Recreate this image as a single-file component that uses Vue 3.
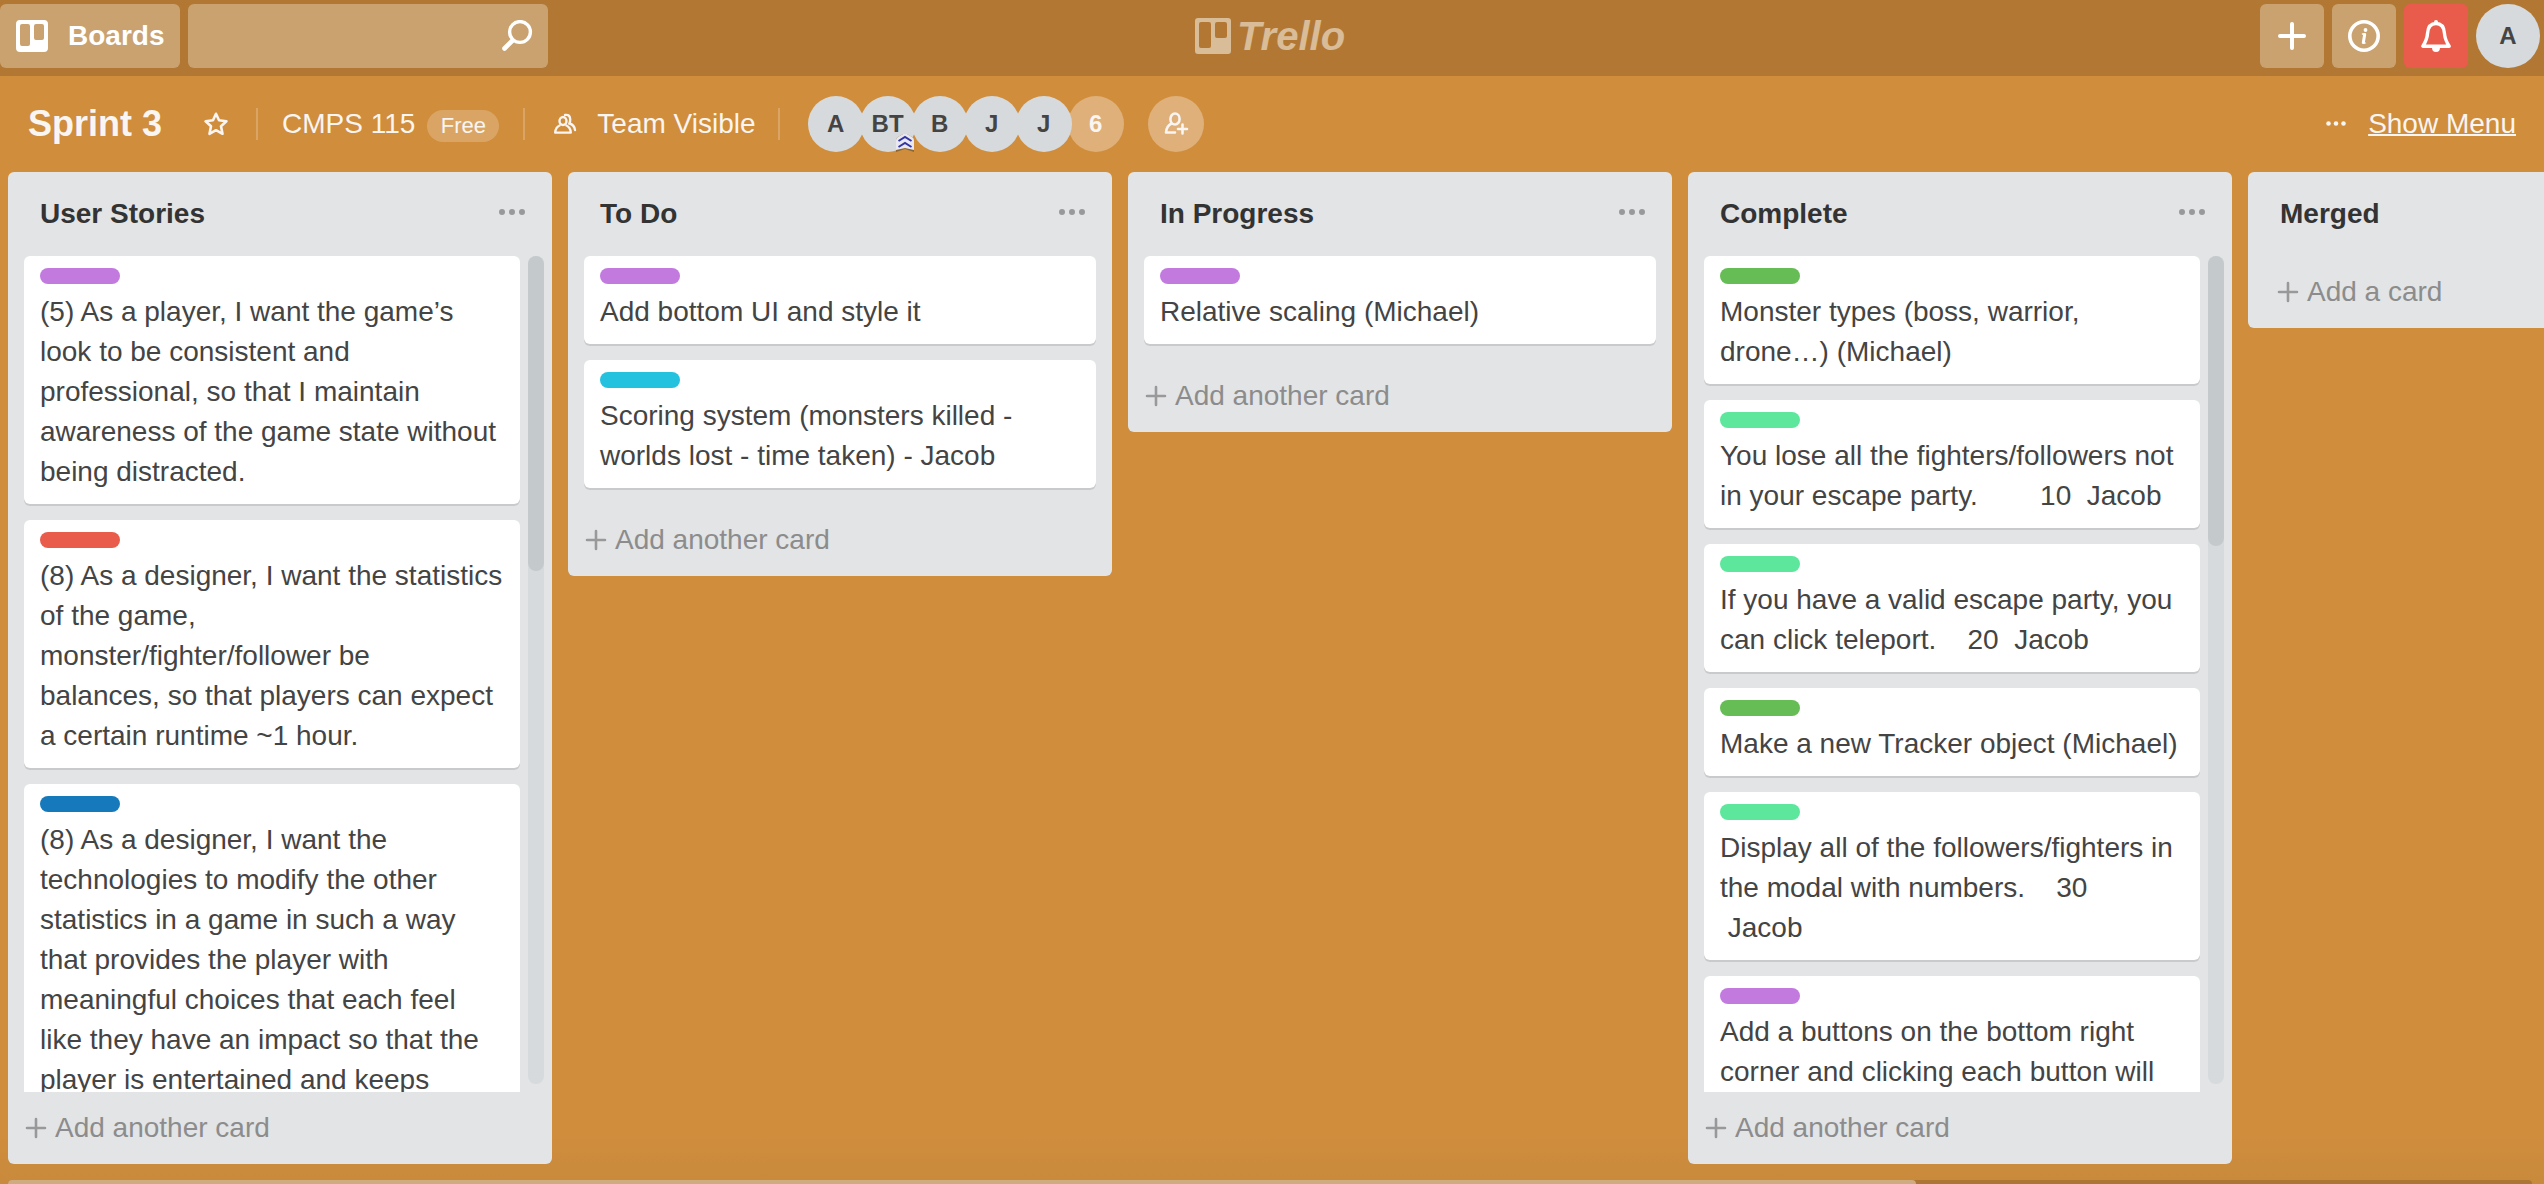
<script setup>
const members = [
  { initials: 'A' },
  { initials: 'BT', admin: true },
  { initials: 'B' },
  { initials: 'J' },
  { initials: 'J' },
]

const lists = [
  {
    title: 'User Stories',
    thumb: 38,
    cards: [
      {
        label: 'purple',
        text: '(5) As a player, I want the game’s\nlook to be consistent and\nprofessional, so that I maintain\nawareness of the game state without\nbeing distracted.',
      },
      {
        label: 'red',
        text: '(8) As a designer, I want the statistics\nof the game,\nmonster/fighter/follower be\nbalances, so that players can expect\na certain runtime ~1 hour.',
      },
      {
        label: 'blue',
        text: '(8) As a designer, I want the\ntechnologies to modify the other\nstatistics in a game in such a way\nthat provides the player with\nmeaningful choices that each feel\nlike they have an impact so that the\nplayer is entertained and keeps',
      },
    ],
  },
  {
    title: 'To Do',
    cards: [
      { label: 'purple', text: 'Add bottom UI and style it' },
      { label: 'sky', text: 'Scoring system (monsters killed -\nworlds lost - time taken) - Jacob' },
    ],
  },
  {
    title: 'In Progress',
    cards: [{ label: 'purple', text: 'Relative scaling (Michael)' }],
  },
  {
    title: 'Complete',
    thumb: 35,
    cards: [
      { label: 'green', text: 'Monster types (boss, warrior,\ndrone…) (Michael)' },
      { label: 'lime', text: 'You lose all the fighters/followers not\nin your escape party.        10  Jacob' },
      { label: 'lime', text: 'If you have a valid escape party, you\ncan click teleport.    20  Jacob' },
      { label: 'green', text: 'Make a new Tracker object (Michael)' },
      { label: 'lime', text: 'Display all of the followers/fighters in\nthe modal with numbers.    30\n Jacob' },
      { label: 'purple', text: 'Add a buttons on the bottom right\ncorner and clicking each button will' },
    ],
  },
  { title: 'Merged', cards: [] },
]
</script>

<template>
  <div class="page">
    <header class="topbar">
      <div class="topbar-left">
        <button class="boards" type="button">
          <svg width="32" height="32" viewBox="0 0 32 32" aria-hidden="true">
            <path
              fill="#fff"
              fill-rule="evenodd"
              d="M4 0H28Q32 0 32 4V28Q32 32 28 32H4Q0 32 0 28V4Q0 0 4 0ZM6 4Q4 4 4 6V24Q4 26 6 26H12Q14 26 14 24V6Q14 4 12 4ZM20 4Q18 4 18 6V18Q18 20 20 20H26Q28 20 28 18V6Q28 4 26 4Z"
            />
          </svg>
          <span>Boards</span>
        </button>
        <form class="search" role="search" @submit.prevent>
          <input type="text" aria-label="Search" />
          <button type="submit" aria-label="Submit search">
            <svg width="32" height="32" viewBox="0 0 32 32" fill="none" stroke="#fff" aria-hidden="true">
              <circle cx="18" cy="12" r="10.400" stroke-width="3.400" />
              <path d="M10.500 20.500L2.500 28.500" stroke-width="4.600" stroke-linecap="round" />
            </svg>
          </button>
        </form>
      </div>

      <a class="logo" href="#" aria-label="Trello home">
        <svg width="36" height="36" viewBox="0 0 36 36" aria-hidden="true">
          <path
            fill="#d9bc98"
            fill-rule="evenodd"
            d="M3 0H33Q36 0 36 3V33Q36 36 33 36H3Q0 36 0 33V3Q0 0 3 0ZM6 4Q4 4 4 6V28Q4 30 6 30H14Q16 30 16 28V6Q16 4 14 4ZM22 4Q20 4 20 6V18Q20 20 22 20H30Q32 20 32 18V6Q32 4 30 4Z"
          />
        </svg>
        <span>Trello</span>
      </a>

      <div class="topbar-right">
        <button class="square" type="button" aria-label="Create">
          <svg width="32" height="32" viewBox="0 0 32 32" aria-hidden="true">
            <path d="M16 4V28M4 16H28" stroke="#fff" stroke-width="4" stroke-linecap="round" />
          </svg>
        </button>
        <button class="square" type="button" aria-label="Information">
          <svg width="32" height="32" viewBox="0 0 32 32" fill="none" stroke="#fff" aria-hidden="true">
            <circle cx="16" cy="16" r="14.200" stroke-width="3.600" />
            <path d="M16.700 14.500L15.300 22.500" stroke-width="3" stroke-linecap="round" />
            <path d="M14.500 14H16.500M15.500 23H17" stroke-width="1.600" stroke-linecap="round" />
            <circle cx="17.500" cy="10" r="1.900" fill="#fff" stroke="none" />
          </svg>
        </button>
        <button class="square alert" type="button" aria-label="Notifications">
          <svg width="32" height="32" viewBox="0 0 32 32" aria-hidden="true">
            <path
              d="M16 3.500C10 3.500 8 8 7.600 13C7.200 18.500 6 21.500 2.800 26.200H29.200C26 21.500 24.800 18.500 24.400 13C24 8 22 3.500 16 3.500Z"
              fill="none"
              stroke="#fff"
              stroke-width="3.400"
              stroke-linejoin="round"
            />
            <path d="M12 27.500H20Q20 32 16 32Q12 32 12 27.500Z" fill="#fff" />
            <circle cx="16" cy="2" r="2" fill="#fff" />
          </svg>
        </button>
        <button class="avatar large" type="button">A</button>
      </div>
    </header>

    <div class="boardbar">
      <h1>Sprint 3</h1>
      <button class="plain star" type="button" aria-label="Star this board">
        <svg width="24" height="24" viewBox="0 0 24 24" aria-hidden="true">
          <path
            d="M12 1.800L15 8.300L22.400 9.300L17 14.300L18.500 21.800L12 18.200L5.500 21.800L7 14.300L1.600 9.300L9 8.300Z"
            fill="none"
            stroke="#f8f5f2"
            stroke-width="2.600"
            stroke-linejoin="round"
          />
        </svg>
      </button>
      <span class="divider"></span>
      <a class="team" href="#">
        <span>CMPS 115</span>
        <span class="pill">Free</span>
      </a>
      <span class="divider"></span>
      <button class="plain visibility" type="button">
        <svg width="24" height="24" viewBox="0 0 24 24" fill="none" stroke="#f8f5f2" aria-hidden="true">
          <ellipse cx="10" cy="9" rx="3.500" ry="4" stroke-width="2.400" />
          <path d="M7.500 13Q2.500 15 2.200 20.600H17.800Q17.500 15 12.500 13" stroke-width="2.400" stroke-linejoin="round" />
          <path d="M12 3Q16.800 2 17.200 7Q17.300 9.500 16.400 11.500Q21.500 13 22 18" stroke-width="2.400" stroke-linecap="round" />
        </svg>
        <span>Team Visible</span>
      </button>
      <span class="divider"></span>
      <div class="members">
        <button v-for="(member, i) in members" :key="i" class="avatar" type="button">
          {{ member.initials }}
          <svg v-if="member.admin" class="rank" width="18" height="18" viewBox="0 0 18 18" aria-hidden="true">
            <path d="M0 6Q0 4 2 3L7 0H11L16 3Q18 4 18 6V18L9 15L0 18Z" fill="#8d6633" />
            <path d="M0 6Q0 4 2 3L7 0H11L16 3Q18 4 18 6V16L9 14L0 16Z" fill="#e9e8ee" />
            <path d="M2.500 7L9 3L15.500 7M2.500 13L9 9L15.500 13" fill="none" stroke="#3236a5" stroke-width="2" />
          </svg>
        </button>
        <button class="avatar faint more" type="button">6</button>
      </div>
      <button class="avatar faint add-member" type="button" aria-label="Add member">
        <svg width="26" height="26" viewBox="0 0 26 26" fill="none" stroke="#f8f5f2" aria-hidden="true">
          <ellipse cx="12" cy="8" rx="4.600" ry="5.500" stroke-width="2.600" />
          <path d="M8.500 12.500Q3.500 15 3 21.500H12" stroke-width="2.600" stroke-linejoin="round" stroke-linecap="round" />
          <path d="M19.500 13.500V22.500M15 18H24" stroke-width="2.600" stroke-linecap="round" />
        </svg>
      </button>
      <div class="menu">
        <svg width="20" height="6" viewBox="0 0 20 6" fill="#f8f5f2" aria-hidden="true">
          <circle cx="2.500" cy="2.500" r="2.300" />
          <circle cx="10" cy="2.500" r="2.300" />
          <circle cx="17.500" cy="2.500" r="2.300" />
        </svg>
        <a href="#">Show Menu</a>
      </div>
    </div>

    <main class="board">
      <section v-for="list in lists" :key="list.title" class="list">
        <div class="list-head">
          <h2>{{ list.title }}</h2>
          <button class="plain" type="button" :aria-label="'Actions for ' + list.title">
            <svg width="28" height="10" viewBox="0 0 28 10" fill="#999" aria-hidden="true">
              <circle cx="4" cy="3" r="3" />
              <circle cx="14" cy="3" r="3" />
              <circle cx="24" cy="3" r="3" />
            </svg>
          </button>
        </div>
        <div class="list-body" :class="{ scrolling: list.thumb }">
          <div class="cards">
            <article v-for="(card, i) in list.cards" :key="i" class="card">
              <span class="label" :class="card.label"></span>
              <p>{{ card.text }}</p>
            </article>
          </div>
          <div v-if="list.thumb" class="track">
            <div class="thumb" :style="{ height: list.thumb + '%' }"></div>
          </div>
        </div>
        <button class="add-card" :class="{ empty: !list.cards.length }" type="button">
          <svg width="22" height="22" viewBox="0 0 22 22" aria-hidden="true">
            <path d="M11 2V20M2 11H20" stroke="#999" stroke-width="2.600" stroke-linecap="round" />
          </svg>
          <span>{{ list.cards.length ? 'Add another card' : 'Add a card' }}</span>
        </button>
      </section>
    </main>

    <div class="hscroll"><div class="hthumb"></div></div>
  </div>
</template>

<style>
body {
  background: #d08d3c;
}
</style>

<style scoped>
.page {
  display: flex;
  flex-direction: column;
  height: 100vh;
  overflow: hidden;
  background: linear-gradient(to top, #c88a3c, #d08d3c 48px);
  color: #444;
  font: 28px/40px "Liberation Sans", Arial, sans-serif;
}
.page * {
  box-sizing: border-box;
}
button,
input {
  margin: 0;
  padding: 0;
  border: 0;
  background: none;
  color: inherit;
  font: inherit;
}
svg {
  display: block;
  flex: none;
}
a {
  color: inherit;
  text-decoration: none;
}
h1,
h2,
p {
  margin: 0;
}

/* Top bar */
.topbar {
  display: grid;
  grid-template-columns: 1fr auto 1fr;
  flex: none;
  height: 76px;
  padding: 4px 4px 8px 0;
  background: #b27833;
}
.topbar-left,
.topbar-right {
  display: flex;
  gap: 8px;
}
.topbar-right {
  justify-content: flex-end;
}
.boards {
  display: flex;
  align-items: center;
  gap: 20px;
  width: 180px;
  padding-left: 16px;
  border-radius: 6px;
  background: #c9a26f;
  color: #fff;
  font-weight: bold;
}
.search {
  display: flex;
  align-items: center;
  width: 360px;
  padding-right: 14px;
  border-radius: 6px;
  background: #c9a26f;
}
.search input {
  flex: 1;
  min-width: 0;
  height: 100%;
  padding-left: 16px;
  color: #fff;
  outline: none;
}
.logo {
  display: flex;
  gap: 6px;
  padding-top: 14px;
  color: #d9bc98;
  font: italic bold 40px/36px "Liberation Sans", Arial, sans-serif;
}
.square {
  display: flex;
  align-items: center;
  justify-content: center;
  width: 64px;
  height: 64px;
  border-radius: 6px;
  background: #c9a26f;
}
.square.alert {
  background: #e95b4b;
}
.avatar {
  position: relative;
  display: flex;
  align-items: center;
  justify-content: center;
  flex: none;
  width: 56px;
  height: 56px;
  border-radius: 50%;
  background: #d6dadc;
  font-size: 24px;
  font-weight: bold;
}
.avatar.large {
  width: 64px;
  height: 64px;
}

/* Board bar */
.boardbar {
  display: flex;
  align-items: center;
  flex: none;
  height: 96px;
  padding: 0 28px;
  color: #f8f5f2;
}
h1 {
  font-size: 36px;
  line-height: 40px;
}
.star {
  margin: 0 28px 0 42px;
}
.divider {
  width: 2px;
  height: 32px;
  background: #daa564;
}
.team {
  display: flex;
  align-items: center;
  gap: 12px;
  margin: 0 24px;
}
.pill {
  width: 72px;
  height: 32px;
  margin-top: 4px;
  border-radius: 16px;
  background: #daa564;
  font-size: 22px;
  line-height: 32px;
  text-align: center;
}
.visibility {
  display: flex;
  align-items: center;
  gap: 20px;
  margin: 0 22px 0 28px;
}
.members {
  display: flex;
  margin: 0 24px 0 28px;
  color: #444;
}
.members .avatar {
  z-index: 1;
}
.members .avatar + .avatar {
  margin-left: -4px;
}
.avatar.faint {
  background: #dfb07a;
  color: #f8f5f2;
}
.members .more {
  z-index: 0;
}
.rank {
  position: absolute;
  right: 2px;
  bottom: 0;
}
.menu {
  display: flex;
  align-items: center;
  gap: 22px;
  margin-left: auto;
}
.menu a {
  text-decoration: underline;
  text-decoration-thickness: 2px;
}

/* Lists */
.board {
  display: flex;
  align-items: flex-start;
  flex: 1;
  gap: 16px;
  min-height: 0;
  padding: 0 8px 16px;
  overflow: hidden;
}
.list {
  display: flex;
  flex-direction: column;
  flex: none;
  width: 544px;
  max-height: 100%;
  border-radius: 6px;
  background: #e2e4e6;
}
.list-head {
  display: flex;
  align-items: center;
  justify-content: space-between;
  flex: none;
  height: 84px;
  padding: 0 26px 0 32px;
}
h2 {
  color: #333;
  font-size: 28px;
  line-height: 40px;
}
.list-body {
  display: flex;
  min-height: 0;
  padding: 0 16px;
}
.list-body.scrolling {
  gap: 8px;
  padding-right: 8px;
}
.cards {
  flex: 1;
  min-width: 0;
  overflow: hidden;
}
.card {
  margin-bottom: 16px;
  padding: 12px 16px;
  border-radius: 6px;
  background: #fff;
  box-shadow: 0 2px 0 #c9cacb;
}
.label {
  display: block;
  width: 80px;
  height: 16px;
  margin-bottom: 8px;
  border-radius: 8px;
}
.purple { background: #c27adf; }
.red { background: #e95b4b; }
.blue { background: #1579bb; }
.sky { background: #24c2df; }
.green { background: #66bd55; }
.lime { background: #5ce79c; }
.card p {
  white-space: pre;
}
.track {
  flex: none;
  width: 16px;
  margin-bottom: 8px;
  border-radius: 8px;
  background: #d6dadc;
}
.thumb {
  border-radius: 8px;
  background: #c4c9cc;
}
.add-card {
  display: flex;
  align-items: center;
  flex: none;
  gap: 8px;
  height: 72px;
  padding-left: 17px;
  color: #8c8c8c;
}
.add-card.empty {
  padding-left: 29px;
}

/* Horizontal scroll bar */
.hscroll {
  flex: none;
  height: 4px;
  margin: 0 12px 0 8px;
  border-radius: 8px 8px 0 0;
  background: #ad7533;
}
.hthumb {
  width: 75.6%;
  height: 100%;
  border-radius: 8px 8px 0 0;
  background: #cfab80;
}
</style>
